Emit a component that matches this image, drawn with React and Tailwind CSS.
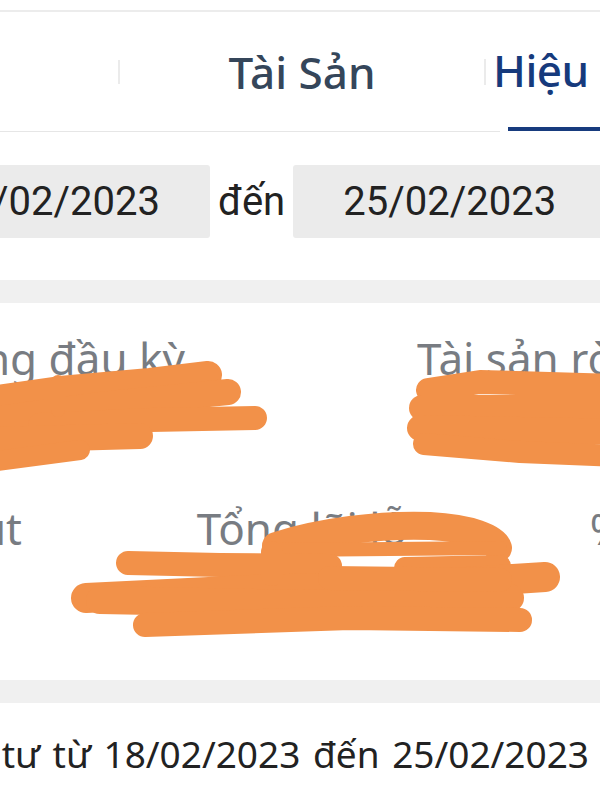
export default function App() {
  return (
    <div className="relative w-[600px] h-[800px] overflow-hidden bg-white font-['Noto_Sans',sans-serif]">
      <div className="h-[10px]" />
      <div className="h-[2px] bg-[#ececec]" />

      {/* Tabs */}
      <div className="ml-[-246px] flex h-[120px] w-[1100px] items-stretch">
        <div className="flex w-[364px] flex-col border-b border-[#e6e6e6]">
          <div className="flex-1" />
        </div>
        <div className="flex w-[2px] flex-col border-b border-[#e6e6e6]">
          <div className="flex flex-1 items-center">
            <div className="h-[24px] w-[2px] bg-[#ebebeb]" />
          </div>
        </div>
        <div className="flex w-[364px] flex-col border-b border-[#e6e6e6]">
          <div className="flex flex-1 items-center justify-center">
            <span className="whitespace-nowrap text-[44px] font-medium leading-[60px] text-[#35465a]">Tài Sản</span>
          </div>
        </div>
        <div className="flex w-[2px] flex-col border-b border-[#e6e6e6]">
          <div className="flex flex-1 items-center">
            <div className="h-[26px] w-[2px] bg-[#ebebeb]" />
          </div>
        </div>
        <div className="flex w-[364px] flex-col">
          <div className="flex flex-1 items-center pl-[7px]">
            <span className="whitespace-nowrap text-[44px] font-medium leading-[60px] tracking-[-0.5px] text-[#163a7c]">Hiệu quả đầu tư</span>
          </div>
          <div className="flex items-end">
            <div className="h-px w-[14px] bg-[#e6e6e6]" />
            <div className="ml-[8px] mb-px h-[4px] flex-1 bg-[#173b7e]" />
          </div>
        </div>
      </div>

      {/* Date range */}
      <div className="ml-[-103px] mt-[33px] flex items-center gap-[8px] font-['Roboto',sans-serif] text-[40px] text-[#222222]">
        <div className="flex h-[73px] w-[313px] shrink-0 items-center justify-center rounded-[3px] bg-[#ebebeb]">18/02/2023</div>
        <span className="shrink-0">đến</span>
        <div className="flex h-[73px] w-[313px] shrink-0 items-center justify-center rounded-[3px] bg-[#ebebeb]">25/02/2023</div>
      </div>

      <div className="mt-[42px] h-[23px] bg-[#f0f0f0]" />

      {/* Card */}
      <div className="h-[377px] pt-[25px] text-[44px] leading-[60px] text-[#787c82]">
        <div className="flex">
          <div className="flex w-[185px] shrink-0 justify-end">
            <span className="shrink-0 whitespace-nowrap">Tài sản ròng đầu kỳ</span>
          </div>
          <div className="ml-[232px] shrink-0 whitespace-nowrap">Tài sản ròng cuối kỳ</div>
        </div>
        <div className="ml-[-246px] mt-[110px] flex w-[1100px] gap-[2px]">
          <div className="w-[364px] shrink-0 whitespace-nowrap text-center">Nạp/Rút</div>
          <div className="w-[364px] shrink-0 whitespace-nowrap text-center">Tổng lãi lỗ</div>
          <div className="w-[364px] shrink-0 whitespace-nowrap text-center">% Lãi lỗ</div>
        </div>
      </div>

      <div className="h-[23px] bg-[#f0f0f0]" />

      <div className="flex w-[589px] justify-end pt-[25px]">
        <span className="shrink-0 whitespace-nowrap text-[37px] leading-[52px] text-[#222222] [word-spacing:3px]">
          Hiệu quả đầu tư từ 18/02/2023 đến 25/02/2023
        </span>
      </div>

      {/* Scribbles */}
      <svg className="pointer-events-none absolute left-0 top-0" width="600" height="800" viewBox="0 0 600 800">
        <g fill="none" stroke="#f29149" strokeLinecap="round" strokeLinejoin="round">
          {/* left */}
          <path d="M -10 400 L 60 390 L 150 382 L 208 375" strokeWidth="28" />
          <path d="M -10 420 L 100 405 L 228 392" strokeWidth="26" />
          <path d="M 40 425 L 150 420 L 255 418" strokeWidth="24" />
          <path d="M -10 440 L 140 436" strokeWidth="26" />
          <path d="M -10 462 L 80 450" strokeWidth="20" />
          <path d="M 58 382 L 58 410" strokeWidth="14" />
          {/* right */}
          <path d="M 428 390 L 480 382 L 620 386" strokeWidth="24" />
          <path d="M 422 408 L 620 408" strokeWidth="26" />
          <path d="M 420 428 L 620 432" strokeWidth="26" />
          <path d="M 424 444 L 520 452 L 620 456" strokeWidth="22" />
          {/* middle */}
          <path d="M 276 546 C 320 532 380 524 430 526 C 470 528 495 538 498 548" strokeWidth="28" />
          <path d="M 280 550 L 500 548" strokeWidth="14" />
          <path d="M 128 563 L 220 565 L 330 566" strokeWidth="24" />
          <path d="M 405 568 L 500 566" strokeWidth="22" />
          <path d="M 86 598 L 250 590 L 420 585 L 545 577" strokeWidth="30" />
          <path d="M 100 600 L 300 604 L 510 598" strokeWidth="28" />
          <path d="M 145 625 L 350 618 L 520 620" strokeWidth="24" />
          <path d="M 272 552 L 272 575" strokeWidth="22" />
          <path d="M 330 578 L 500 580" strokeWidth="24" />
        </g>
      </svg>
    </div>
  );
}
